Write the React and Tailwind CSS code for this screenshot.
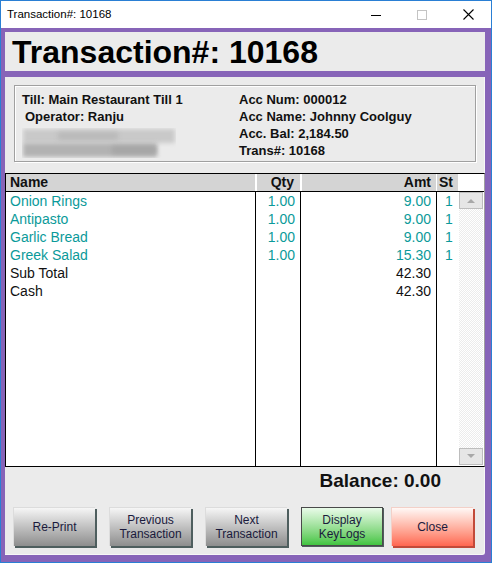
import React from "react";

const items = [
  { name: "Onion Rings", qty: "1.00", amt: "9.00", st: "1" },
  { name: "Antipasto", qty: "1.00", amt: "9.00", st: "1" },
  { name: "Garlic Bread", qty: "1.00", amt: "9.00", st: "1" },
  { name: "Greek Salad", qty: "1.00", amt: "15.30", st: "1" },
];

const totals = [
  { name: "Sub Total", amt: "42.30" },
  { name: "Cash", amt: "42.30" },
];

function Btn({ children, tone = "gray", className = "" }) {
  const tones = {
    gray: "bg-gradient-to-b from-[#f6f6f6] to-[#8e8e8e] border-t border-l border-[#dcdcdc] shadow-[2px_2px_0_#4e5e5e]",
    green: "bg-gradient-to-b from-[#e9fbe9] to-[#3fc43f] border border-[#4a4a4a] shadow-[1px_1px_0_#4e5e5e]",
    red: "bg-gradient-to-b from-[#fff8f6] to-[#ff6650] border-t border-l border-[#f3d0c8] shadow-[2px_2px_0_#c24a3a]",
  };
  return (
    <div
      className={`w-[82px] h-[39px] flex items-center justify-center text-center text-[12px] leading-[14px] text-[#1a1a3c] ${tones[tone]} ${className}`}
    >
      {children}
    </div>
  );
}

export default function App() {
  return (
    <div
      className="w-[492px] h-[563px] border border-[#2a7fd4] bg-[#8764b8] flex flex-col overflow-hidden"
      style={{ fontFamily: "'Liberation Sans', Arial, sans-serif" }}
    >
      {/* title bar */}
      <div className="h-[27px] bg-white flex items-center shrink-0">
        <span className="ml-[6px] text-[11.5px] text-black">Transaction#: 10168</span>
        <div className="ml-auto flex items-center h-full">
          <div className="w-[46px] h-full flex items-center justify-center">
            <svg width="10" height="10" viewBox="0 0 10 10">
              <line x1="0" y1="5.5" x2="10" y2="5.5" stroke="#000" strokeWidth="1" />
            </svg>
          </div>
          <div className="w-[46px] h-full flex items-center justify-center">
            <svg width="10" height="10" viewBox="0 0 10 10">
              <rect x="0.5" y="0.5" width="9" height="9" fill="none" stroke="#c4c4c4" strokeWidth="1" />
            </svg>
          </div>
          <div className="w-[46px] h-full flex items-center justify-center">
            <svg width="11" height="11" viewBox="0 0 11 11">
              <path d="M0.5 0.5 L10.5 10.5 M10.5 0.5 L0.5 10.5" stroke="#000" strokeWidth="1.1" />
            </svg>
          </div>
        </div>
      </div>

      {/* header panel */}
      <div className="mt-[4px] ml-[4px] w-[480px] h-[39px] bg-[#ebebeb] flex items-center shrink-0">
        <span className="ml-[7px] text-[32px] font-bold text-black leading-none">Transaction#: 10168</span>
      </div>

      {/* main panel */}
      <div className="mt-[6px] ml-[4px] w-[480px] h-[478px] bg-[#ebebeb] border-b border-r border-[#f7f7f7] rounded-br-[3px] flex flex-col shrink-0">
        {/* info box */}
        <div className="mt-[8px] ml-[9px] w-[462px] h-[77px] border border-[#a0a0a0] shadow-[inset_1px_1px_0_#fff,1px_1px_0_#fff] flex text-[13px] font-bold text-[#111] leading-[17px]">
          <div className="w-[224px] pl-[7px] pt-[5px]">
            <div>Till: Main Restaurant Till 1</div>
            <div className="pl-[3px]">Operator: Ranju</div>
            <div className="mt-[3px] w-[154px] h-[30px] relative overflow-hidden">
              <div className="absolute left-[1px] top-[1px] w-[152px] h-[14px] bg-[#c9c9c9] blur-[2px]" />
              <div className="absolute left-[1px] top-[15px] w-[134px] h-[14px] bg-[#b2b2b2] blur-[2px]" />
              <div className="absolute left-[36px] top-[4px] w-[60px] h-[8px] bg-[#bababa] blur-[2px]" />
              <div className="absolute left-[90px] top-[18px] w-[44px] h-[8px] bg-[#a6a6a6] blur-[2px]" />
            </div>
          </div>
          <div className="pt-[5px]">
            <div>Acc Num: 000012</div>
            <div>Acc Name: Johnny Coolguy</div>
            <div>Acc. Bal: 2,184.50</div>
            <div>Trans#: 10168</div>
          </div>
        </div>

        {/* table */}
        <div className="mt-[11px] w-[480px] h-[294px] bg-white border border-black border-r-[#a0a0a0] flex flex-col text-[14px]">
          {/* header */}
          <div className="h-[18px] flex border-b border-black font-bold text-[#111] leading-[17px] shrink-0">
            <div className="w-[249px] bg-[#d4d4d4] pl-[4px]">Name</div>
            <div className="w-[45px] bg-[#d4d4d4] border-l-2 border-white text-right pr-[6px]">Qty</div>
            <div className="w-[136px] bg-[#d4d4d4] border-l-2 border-white text-right pr-[5px]">Amt</div>
            <div className="w-[22px] bg-[#d4d4d4] border-l border-white pl-[2px]">St</div>
            <div className="flex-1 bg-white" />
          </div>
          {/* body */}
          <div className="flex-1 flex">
            <div className="flex">
              <div className="w-[249px] pl-[4px] leading-[18px]">
                {items.map((r) => (
                  <div key={r.name} className="text-[#0b9a9a]">{r.name}</div>
                ))}
                {totals.map((r) => (
                  <div key={r.name} className="text-[#111]">{r.name}</div>
                ))}
              </div>
              <div className="w-[45px] border-l border-black text-right pr-[5px] leading-[18px]">
                {items.map((r, i) => (
                  <div key={i} className="text-[#0b9a9a]">{r.qty}</div>
                ))}
              </div>
              <div className="w-[136px] border-l border-black text-right pr-[5px] leading-[18px]">
                {items.map((r, i) => (
                  <div key={i} className="text-[#0b9a9a]">{r.amt}</div>
                ))}
                {totals.map((r, i) => (
                  <div key={"t" + i} className="text-[#111]">{r.amt}</div>
                ))}
              </div>
              <div className="w-[22px] border-l border-black text-center pl-[3px] leading-[18px]">
                {items.map((r, i) => (
                  <div key={i} className="text-[#0b9a9a]">{r.st}</div>
                ))}
              </div>
            </div>
            {/* scrollbar */}
            <div className="flex-1 flex flex-col pb-[1px]">
              <div className="mx-[1px] h-[17px] bg-[#e6e6e6] border border-[#bdbdbd] flex items-center justify-center shrink-0">
                <svg width="8" height="5" viewBox="0 0 8 5">
                  <path d="M0 5 L4 1 L8 5 Z" fill="#a8a8a8" />
                </svg>
              </div>
              <div className="flex-1 mx-[1px] bg-[repeating-conic-gradient(#ececec_0_25%,#ffffff_0_50%)] bg-[length:2px_2px]" />
              <div className="mx-[1px] h-[17px] bg-[#e6e6e6] border border-[#bdbdbd] flex items-center justify-center shrink-0">
                <svg width="8" height="5" viewBox="0 0 8 5">
                  <path d="M0 0 L4 4 L8 0 Z" fill="#a8a8a8" />
                </svg>
              </div>
            </div>
          </div>
        </div>

        {/* balance */}
        <div className="h-[25px] flex items-center justify-end pr-[43px] pt-[1px]">
          <span className="text-[19px] font-bold text-[#111] leading-none">Balance: 0.00</span>
        </div>

        {/* buttons */}
        <div className="mt-[15px] flex">
          <Btn className="ml-[8px]">Re-Print</Btn>
          <Btn className="ml-[14px]">
            Previous
            <br />
            Transaction
          </Btn>
          <Btn className="ml-[14px]">
            Next
            <br />
            Transaction
          </Btn>
          <Btn tone="green" className="ml-[14px]">
            Display
            <br />
            KeyLogs
          </Btn>
          <Btn tone="red" className="ml-[8px]">Close</Btn>
        </div>
      </div>
    </div>
  );
}
